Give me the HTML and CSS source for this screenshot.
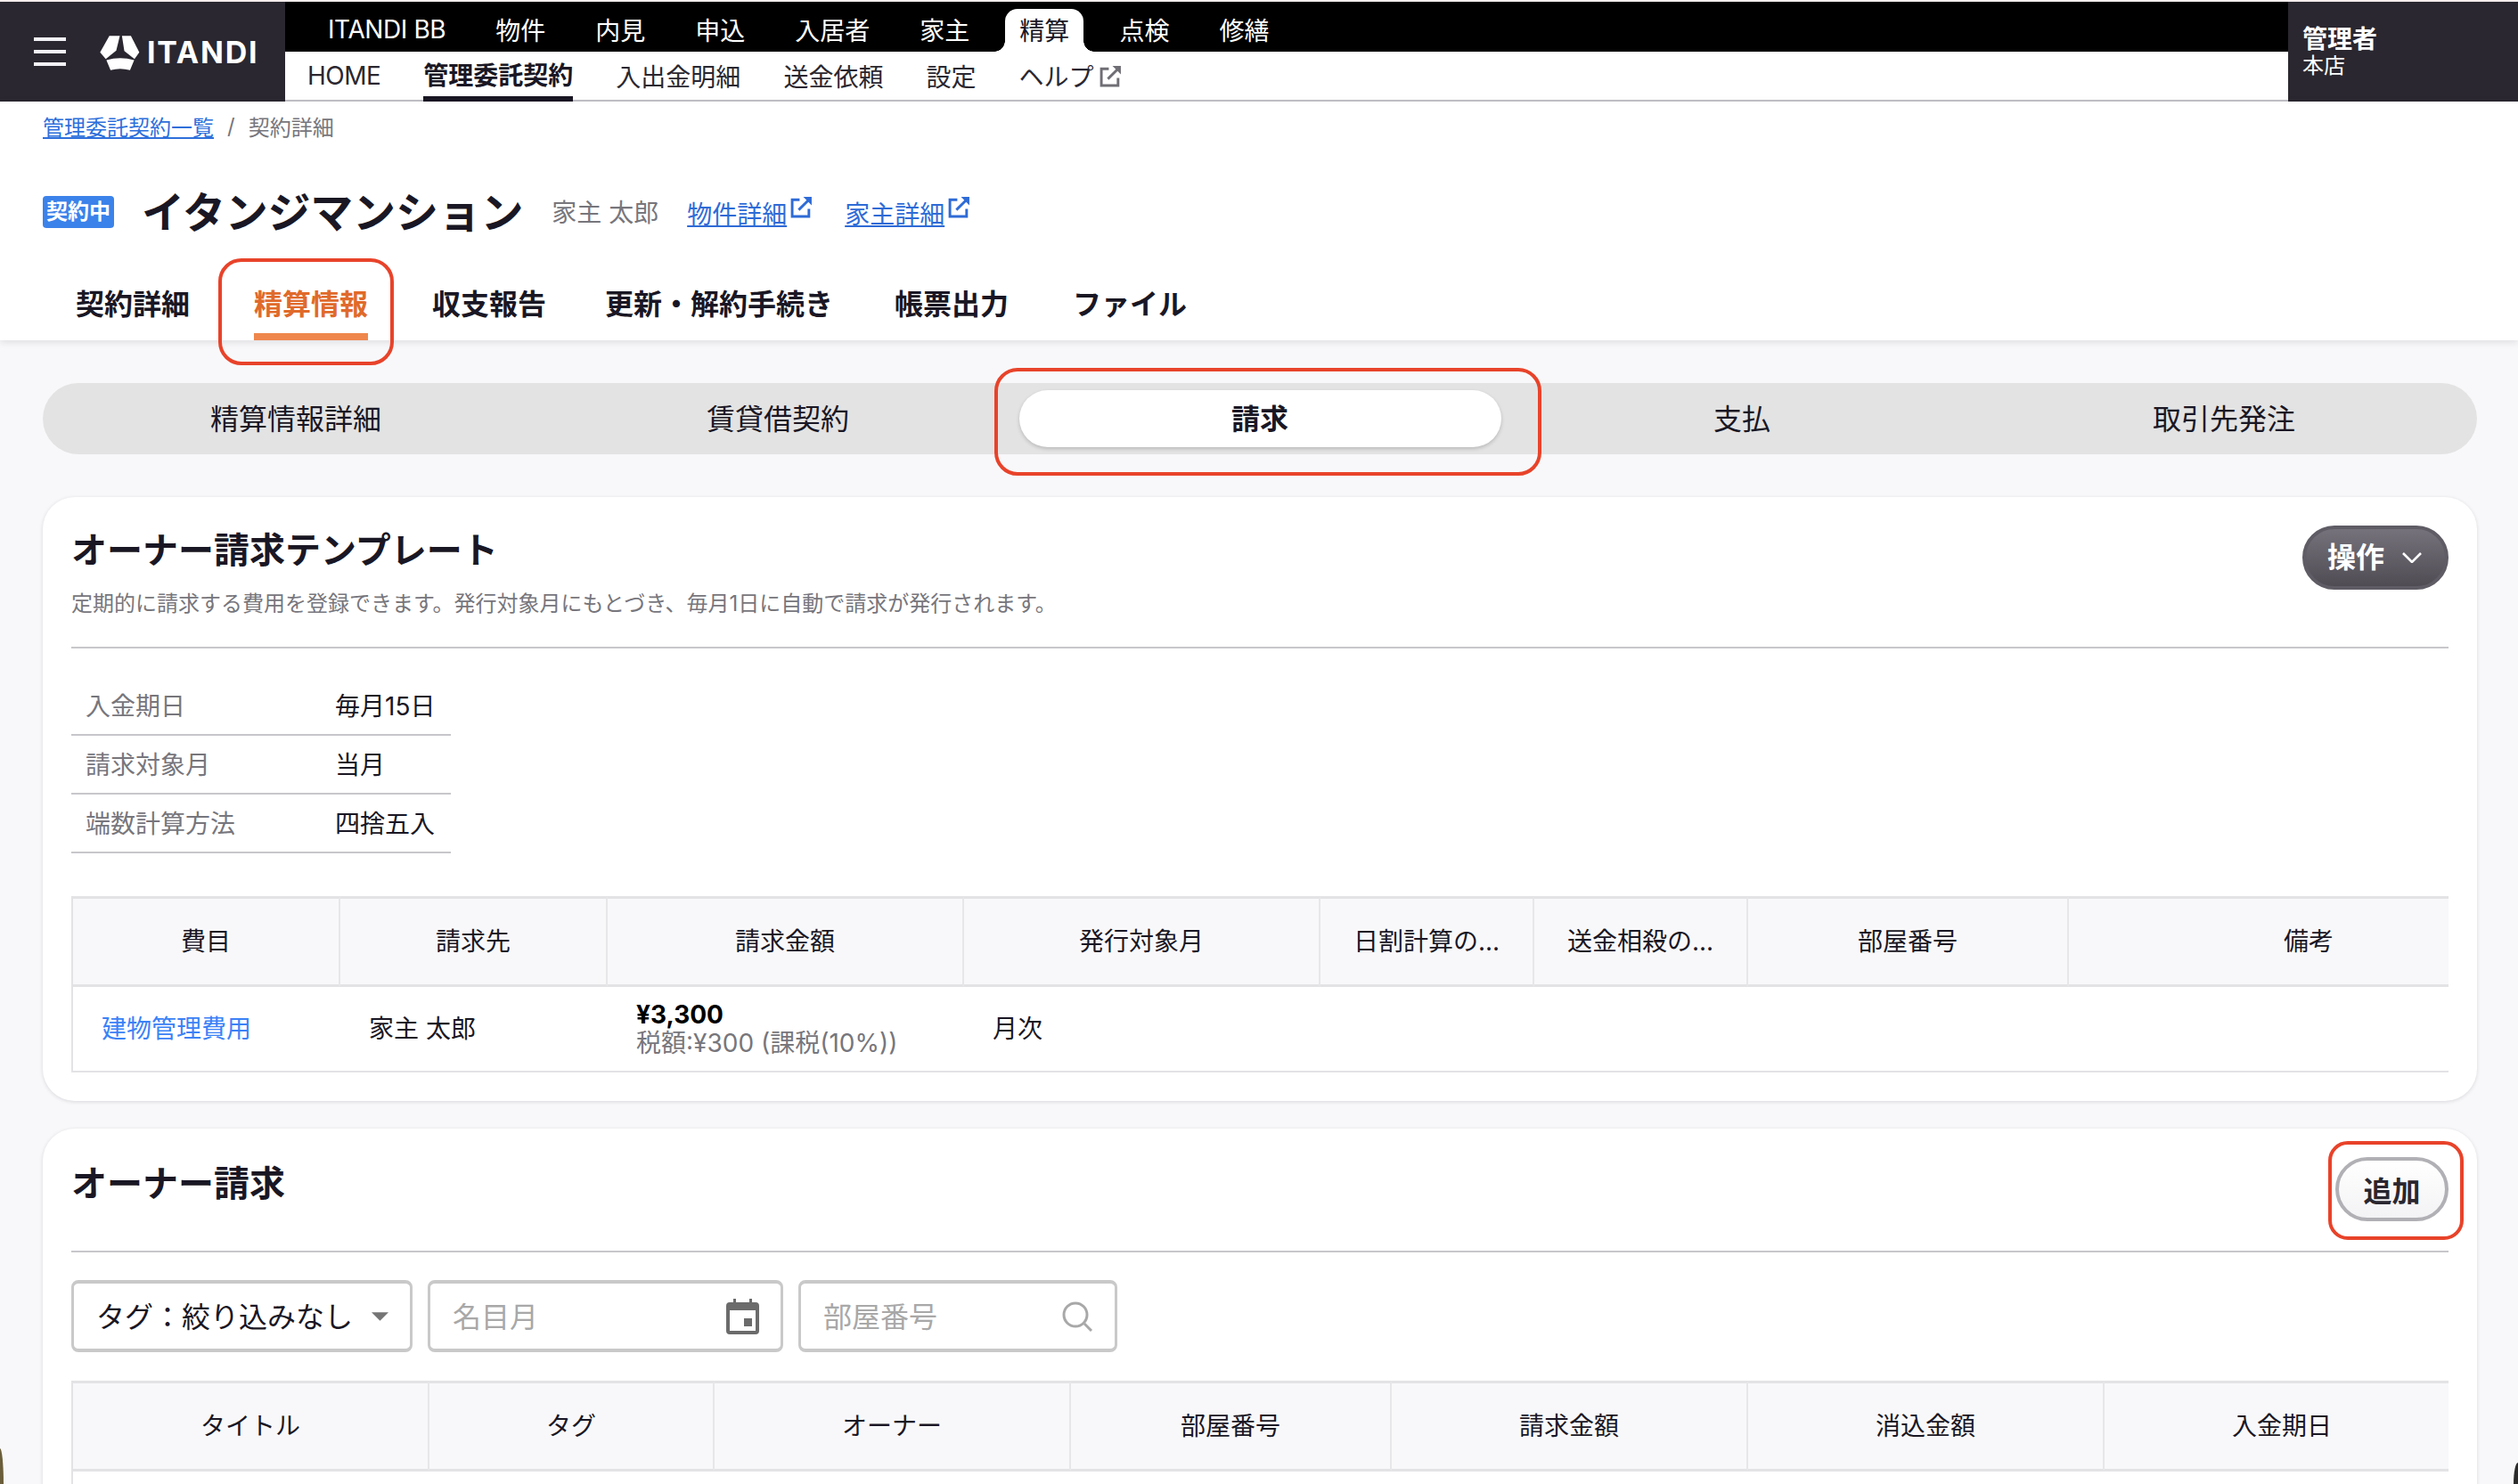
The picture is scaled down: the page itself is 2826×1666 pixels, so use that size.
FILE: index.html
```html
<!DOCTYPE html>
<html lang="ja">
<head>
    <meta charset="UTF-8">
    <title>契約詳細</title>
    <link rel="stylesheet" href="styles.css">
</head>
<body>

<header class="app-header">
    <div class="brand">
        <div class="burger"><span></span><span></span><span></span></div>
        <svg class="logo-mark" viewBox="336 116 134 116">
            <path d="M368 117H403L391 166L356 194L337 172Z"/>
            <path d="M410 117H440L468 172L452 194L418 167Z"/>
            <path d="M358 198Q404 184 451 198L437 231Q404 222 372 231Z"/>
        </svg>
        <span class="logo-text">ITANDI</span>
    </div>
    <div class="nav-area">
        <nav class="nav-top">
            <a class="nav-top-item bb">ITANDI BB</a>
            <a class="nav-top-item">物件</a>
            <a class="nav-top-item">内見</a>
            <a class="nav-top-item">申込</a>
            <a class="nav-top-item">入居者</a>
            <a class="nav-top-item">家主</a>
            <a class="nav-top-item active">精算</a>
            <a class="nav-top-item">点検</a>
            <a class="nav-top-item">修繕</a>
        </nav>
        <nav class="nav-sub">
            <a class="nav-sub-item home">HOME</a>
            <a class="nav-sub-item active">管理委託契約</a>
            <a class="nav-sub-item">入出金明細</a>
            <a class="nav-sub-item">送金依頼</a>
            <a class="nav-sub-item">設定</a>
            <a class="nav-sub-item help">ヘルプ
                <svg class="ext-icon grey" viewBox="0 0 24 24"><path class="ext-box" d="M10 4H2V22H20V14"/><path class="ext-line" d="M9 15L20 4"/><path class="ext-head" d="M14 1H23V10Z"/></svg>
            </a>
        </nav>
    </div>
    <div class="user-box">
        <div class="user-name">管理者</div>
        <div class="user-shop">本店</div>
    </div>
</header>

<section class="page-head">
    <div class="breadcrumb">
        <a class="crumb-link">管理委託契約一覧</a>
        <span class="crumb-sep">/</span>
        <span class="crumb-now">契約詳細</span>
    </div>
    <div class="title-row">
        <span class="badge">契約中</span>
        <h1 class="page-title">イタンジマンション</h1>
        <span class="owner-name">家主 太郎</span>
        <a class="ext-link"><span class="ext-text">物件詳細</span>
            <svg class="ext-icon" viewBox="0 0 24 24"><path class="ext-box" d="M10 4H2V22H20V14"/><path class="ext-line" d="M9 15L20 4"/><path class="ext-head" d="M14 1H23V10Z"/></svg>
        </a>
        <a class="ext-link"><span class="ext-text">家主詳細</span>
            <svg class="ext-icon" viewBox="0 0 24 24"><path class="ext-box" d="M10 4H2V22H20V14"/><path class="ext-line" d="M9 15L20 4"/><path class="ext-head" d="M14 1H23V10Z"/></svg>
        </a>
    </div>
    <div class="tabs">
        <a class="tab">契約詳細</a>
        <a class="tab active">精算情報</a>
        <a class="tab">収支報告</a>
        <a class="tab tab-renew">更新・解約手続き</a>
        <a class="tab tab-print">帳票出力</a>
        <a class="tab">ファイル</a>
    </div>
</section>

<main class="content">
    <div class="segments">
        <a class="segment">精算情報詳細</a>
        <a class="segment">賃貸借契約</a>
        <a class="segment active">請求</a>
        <a class="segment">支払</a>
        <a class="segment">取引先発注</a>
    </div>

    <section class="card card-template">
        <div class="card-head">
            <div>
                <h2 class="card-title">オーナー請求テンプレート</h2>
                <p class="card-desc">定期的に請求する費用を登録できます。発行対象月にもとづき、毎月1日に自動で請求が発行されます。</p>
            </div>
            <button class="btn-dark"><span class="btn-label">操作</span>
                <svg class="chevron" viewBox="0 0 22 12"><path d="M1 1L11 11L21 1"/></svg>
            </button>
        </div>

        <dl class="info-list">
            <div class="info-row"><dt>入金期日</dt><dd>毎月15日</dd></div>
            <div class="info-row"><dt>請求対象月</dt><dd>当月</dd></div>
            <div class="info-row"><dt>端数計算方法</dt><dd>四捨五入</dd></div>
        </dl>

        <div class="table-wrap">
            <table class="data-table fee-table">
                <colgroup>
                    <col class="w302"><col class="w300"><col class="w400"><col class="w400">
                    <col class="w240"><col class="w240"><col class="w360"><col class="w540">
                </colgroup>
                <thead>
                    <tr>
                        <th>費目</th><th>請求先</th><th>請求金額</th><th>発行対象月</th>
                        <th>日割計算の...</th><th>送金相殺の...</th><th>部屋番号</th><th>備考</th>
                    </tr>
                </thead>
                <tbody>
                    <tr>
                        <td><a class="cell-link">建物管理費用</a></td>
                        <td>家主 太郎</td>
                        <td class="amount"><strong>¥3,300</strong><span class="tax">税額:¥300 (課税(10%))</span></td>
                        <td>月次</td>
                        <td></td><td></td><td></td><td></td>
                    </tr>
                </tbody>
            </table>
        </div>
    </section>

    <section class="card">
        <div class="card-head">
            <h2 class="card-title">オーナー請求</h2>
            <button class="btn-light">追加</button>
        </div>

        <div class="filters">
            <div class="field field-tag">
                <span class="field-text">タグ：絞り込みなし</span>
                <svg class="caret" viewBox="0 0 20 10"><path d="M0 0H20L10 10Z"/></svg>
            </div>
            <div class="field field-month">
                <span class="field-text placeholder">名目月</span>
                <svg class="cal-icon" viewBox="0 0 37 40">
                    <path d="M8 0H11V4H26V0H29V4H33Q37 4 37 8V36Q37 40 33 40H4Q0 40 0 36V8Q0 4 4 4H8ZM4 13V36H33V13Z" fill-rule="evenodd"/>
                    <rect x="20" y="22" width="9" height="9"/>
                </svg>
            </div>
            <div class="field field-room">
                <span class="field-text placeholder">部屋番号</span>
                <svg class="search-icon" viewBox="0 0 36 34"><circle cx="16" cy="15" r="13"/><path d="M26 25L34 33"/></svg>
            </div>
        </div>

        <div class="table-wrap">
            <table class="data-table bill-table">
                <colgroup>
                    <col class="w402"><col class="w320"><col class="w400"><col class="w360">
                    <col class="w400"><col class="w400"><col class="w400">
                </colgroup>
                <thead>
                    <tr>
                        <th>タイトル</th><th>タグ</th><th>オーナー</th><th>部屋番号</th>
                        <th>請求金額</th><th>消込金額</th><th>入金期日</th>
                    </tr>
                </thead>
                <tbody>
                    <tr><td></td><td></td><td></td><td></td><td></td><td></td><td></td></tr>
                </tbody>
            </table>
        </div>
    </section>
</main>

<!-- 赤枠の注釈 -->
<div class="callout callout-tab"></div>
<div class="callout callout-segment"></div>
<div class="callout callout-add"></div>

<div class="corner corner-left"></div>
<div class="corner corner-right"></div>

</body>
</html>
```

FILE: styles.css
```css
* {
    box-sizing: border-box;
}
body {
    margin: 0;
    height: 100vh;
    overflow: hidden;
    position: relative;
    background: #f8f8fa;
    color: #1a1724;
    font-family: Inter, "Noto Sans CJK JP", sans-serif;
    font-size: 28px;
}
h1, h2, p, dl, dd {
    margin: 0;
}

/* header */
.app-header {
    display: grid;
    grid-template-columns: 320px 1fr 258px;
    height: 114px;
    border-top: 2px solid #f3ecec;
}
.brand {
    display: flex;
    align-items: center;
    padding-left: 38px;
    background: #2a2730;
    color: #fff;
}
.burger {
    display: flex;
    flex-direction: column;
    gap: 10px;
    width: 36px;
    margin-right: 38px;
}
.burger span {
    height: 4px;
    background: #f3f2f7;
}
.logo-mark {
    width: 45px;
    height: 39px;
    fill: #fff;
    margin-right: 8px;
    margin-top: 2px;
}
.logo-text {
    font-size: 34px;
    font-weight: 700;
    letter-spacing: 1.8px;
    line-height: 1;
    margin-top: 2px;
}
.nav-area {
    display: flex;
    flex-direction: column;
}
.nav-top {
    display: flex;
    align-items: flex-end;
    gap: 24px;
    height: 56px;
    padding-left: 32px;
    background: #000;
}
.nav-top-item {
    position: relative;
    display: flex;
    align-items: center;
    height: 48px;
    padding: 0 16px 3px;
    color: #fff;
}
.nav-top-item.bb {
    letter-spacing: -0.4px;
}
.nav-top-item.active {
    background: #fff;
    color: #1a1724;
    border-radius: 14px 14px 0 0;
}
.nav-top-item.active::before,
.nav-top-item.active::after {
    content: "";
    position: absolute;
    bottom: 0;
    width: 12px;
    height: 12px;
}
.nav-top-item.active::before {
    left: -12px;
    background: radial-gradient(circle at 0 0, #000 11.5px, #fff 12px);
}
.nav-top-item.active::after {
    right: -12px;
    background: radial-gradient(circle at 100% 0, #000 11.5px, #fff 12px);
}
.nav-sub {
    display: flex;
    gap: 48px;
    height: 56px;
    padding-left: 25px;
    background: #fff;
    border-bottom: 2px solid #c4c3c9;
}
.nav-sub-item {
    display: flex;
    align-items: center;
    height: 56px;
    padding-bottom: 2px;
    color: #2a2730;
}
.nav-sub-item.home {
    letter-spacing: -0.5px;
}
.nav-sub-item.active {
    font-weight: 700;
    color: #1a1724;
    border-bottom: 6px solid #1a1724;
    padding-bottom: 0;
}
.help {
    gap: 7px;
}
.user-box {
    padding: 25px 0 0 16px;
    background: #2a2730;
    color: #fff;
}
.user-name {
    font-weight: 700;
    line-height: 34px;
}
.user-shop {
    font-size: 24px;
    line-height: 26px;
}
.ext-icon {
    width: 25px;
    height: 25px;
    flex: none;
}
.ext-box, .ext-line {
    fill: none;
    stroke: #2e6bd6;
    stroke-width: 2.8;
}
.ext-head {
    fill: #2e6bd6;
}
.ext-icon.grey .ext-box, .ext-icon.grey .ext-line {
    stroke: #6f6e75;
}
.ext-icon.grey .ext-head {
    fill: #6f6e75;
}

/* page head */
.page-head {
    height: 268px;
    padding: 12px 0 0 48px;
    background: #fff;
    box-shadow: 0 2px 8px rgba(30, 30, 50, 0.12);
    position: relative;
}
.breadcrumb {
    display: flex;
    align-items: center;
    gap: 15px;
    height: 30px;
    font-size: 24px;
    color: #77767c;
}
.crumb-link {
    color: #2e6fdb;
    text-decoration: underline;
}
.title-row {
    display: flex;
    align-items: center;
    height: 76px;
    margin-top: 44px;
}
.badge {
    width: 80px;
    height: 36px;
    border-radius: 4px;
    background: #3b82ea;
    color: #fff;
    font-size: 24px;
    font-weight: 700;
    line-height: 35px;
    text-align: center;
    margin-right: 31px;
}
.page-title {
    font-size: 48px;
    font-weight: 700;
    margin-right: 32px;
    padding-bottom: 6px;
    letter-spacing: -0.2px;
}
.owner-name {
    color: #77767c;
    margin-right: 32px;
    padding-bottom: 3px;
}
.ext-link {
    display: flex;
    align-items: flex-start;
    gap: 4px;
    margin-right: 36px;
    padding-top: 2px;
    color: #2e6bd6;
}
.ext-text {
    text-decoration: underline;
}
.ext-link .ext-icon {
    margin-top: 1px;
}
.tabs {
    display: flex;
    gap: 72px;
    margin-top: 42px;
    padding-left: 37px;
}
.tab {
    height: 64px;
    padding-top: 2px;
    font-size: 32px;
    font-weight: 700;
    line-height: 44px;
}
.tab.active {
    color: #e06a2b;
    border-bottom: 8px solid #ef874d;
}
.tab-renew {
    margin-left: -6px;
}
.tab-print {
    margin-left: -3px;
}

/* content */
.content {
    padding: 48px 46px 0 48px;
}
.segments {
    display: grid;
    grid-template-columns: repeat(5, 541px);
    justify-content: center;
    height: 80px;
    padding: 8px;
    border-radius: 40px;
    background: #e3e3e3;
    font-size: 32px;
}
.segment {
    display: flex;
    align-items: center;
    justify-content: center;
    padding-bottom: 4px;
    border-radius: 32px;
}
.segment.active {
    background: #fff;
    font-weight: 700;
    box-shadow: 0 2px 4px rgba(0, 0, 0, 0.18);
}
.card {
    margin-top: 31px;
    padding: 32px;
    border-radius: 36px;
    background: #fff;
    box-shadow: 0 1px 4px rgba(30, 30, 50, 0.14);
}
.card-template {
    height: 678px;
    margin-top: 48px;
}
.card-head {
    display: flex;
    justify-content: space-between;
    align-items: flex-start;
    padding-bottom: 33px;
    border-bottom: 2px solid #c7c7cb;
}
.card-template .card-head {
    padding-bottom: 30px;
}
.card-title {
    font-size: 40px;
    font-weight: 700;
    line-height: 56px;
}
.card-head > .card-title {
    margin-top: 2px;
}
.card-desc {
    margin-top: 14px;
    font-size: 24px;
    line-height: 36px;
    color: #77767c;
}
.btn-dark {
    display: flex;
    align-items: center;
    justify-content: center;
    gap: 20px;
    width: 164px;
    height: 72px;
    padding: 0 2px 0 0;
    border: 4px solid #5f5c65;
    border-radius: 36px;
    background: linear-gradient(#75727b, #4f4c54);
    color: #fff;
    font: 700 32px Inter, "Noto Sans CJK JP", sans-serif;
}
.btn-label {
    padding-bottom: 6px;
}
.chevron {
    width: 22px;
    height: 12px;
    fill: none;
    stroke: #fff;
    stroke-width: 2.6;
}
.btn-light {
    width: 127px;
    height: 72px;
    padding: 0;
    border: 4px solid #b0b0b5;
    border-radius: 36px;
    background: linear-gradient(#fff, #f3f3f5);
    color: #2a2730;
    font: 700 32px Inter, "Noto Sans CJK JP", sans-serif;
}

/* info list */
.info-list {
    width: 426px;
    margin-top: 32px;
}
.info-row {
    display: flex;
    align-items: center;
    height: 66px;
    padding: 0 0 3px 16px;
    border-bottom: 2px solid #c7c7cb;
}
.info-row dt {
    width: 280px;
    color: #77767c;
}

/* tables */
.table-wrap {
    overflow: hidden;
    margin-top: 48px;
}
.filters + .table-wrap {
    margin-top: 32px;
}
.data-table {
    table-layout: fixed;
    border-collapse: separate;
    border-spacing: 0;
}
.fee-table { width: 2782px; }
.bill-table { width: 2682px; }
.w240 { width: 240px; }
.w300 { width: 300px; }
.w302 { width: 302px; }
.w320 { width: 320px; }
.w360 { width: 360px; }
.w400 { width: 400px; }
.w402 { width: 402px; }
.w540 { width: 540px; }
.data-table th {
    height: 102px;
    padding: 0 0 5px;
    background: #f8f8fa;
    border-top: 3px solid #e3e3e6;
    border-bottom: 3px solid #e3e3e6;
    border-right: 2px solid #e7e7ea;
    font-weight: 400;
    text-align: center;
}
.data-table th:first-child, .data-table td:first-child {
    border-left: 2px solid #e3e3e6;
}
.data-table td {
    height: 96px;
    padding: 0 0 0 32px;
    border-bottom: 2px solid #e3e3e6;
    line-height: 32px;
}
.cell-link {
    color: #3b82f6;
}
.amount strong {
    display: block;
    font-weight: 700;
    color: #000;
}
.tax {
    display: block;
    color: #77767c;
}

/* filters */
.filters {
    display: flex;
    gap: 17px;
    margin-top: 31px;
    font-size: 32px;
}
.field {
    display: flex;
    align-items: center;
    justify-content: space-between;
    height: 81px;
    padding: 0 24px 0 25px;
    border: 3px solid #c9c9c9;
    border-top-width: 4px;
    border-bottom-width: 4px;
    border-radius: 8px;
    background: #fff;
}
.field-text {
    padding-bottom: 4px;
}
.field-tag { width: 383px; }
.field-month { width: 399px; }
.field-room { width: 358px; }
.placeholder {
    color: #a8a8a8;
}
.caret {
    width: 19px;
    height: 10px;
    fill: #757575;
}
.cal-icon {
    width: 37px;
    height: 40px;
    fill: #6b6b6b;
}
.search-icon {
    width: 36px;
    height: 34px;
    fill: none;
    stroke: #a8a8a8;
    stroke-width: 3;
}

/* annotations */
.callout {
    position: absolute;
    border: 4px solid #e8432a;
    border-radius: 26px;
}
.callout-tab {
    left: 245px;
    top: 290px;
    width: 197px;
    height: 120px;
}
.callout-segment {
    left: 1116px;
    top: 413px;
    width: 614px;
    height: 121px;
}
.callout-add {
    left: 2613px;
    top: 1281px;
    width: 152px;
    height: 111px;
    border-radius: 22px;
}

/* window corners */
.corner {
    position: absolute;
    bottom: 0;
}
.corner-left {
    left: 0;
    width: 4px;
    height: 40px;
    background: #6b5e3a;
    border-top-right-radius: 100% 100%;
}
.corner-right {
    right: 0;
    width: 5px;
    height: 24px;
    background: #2b2b2b;
    border-top-left-radius: 100% 100%;
}
```
